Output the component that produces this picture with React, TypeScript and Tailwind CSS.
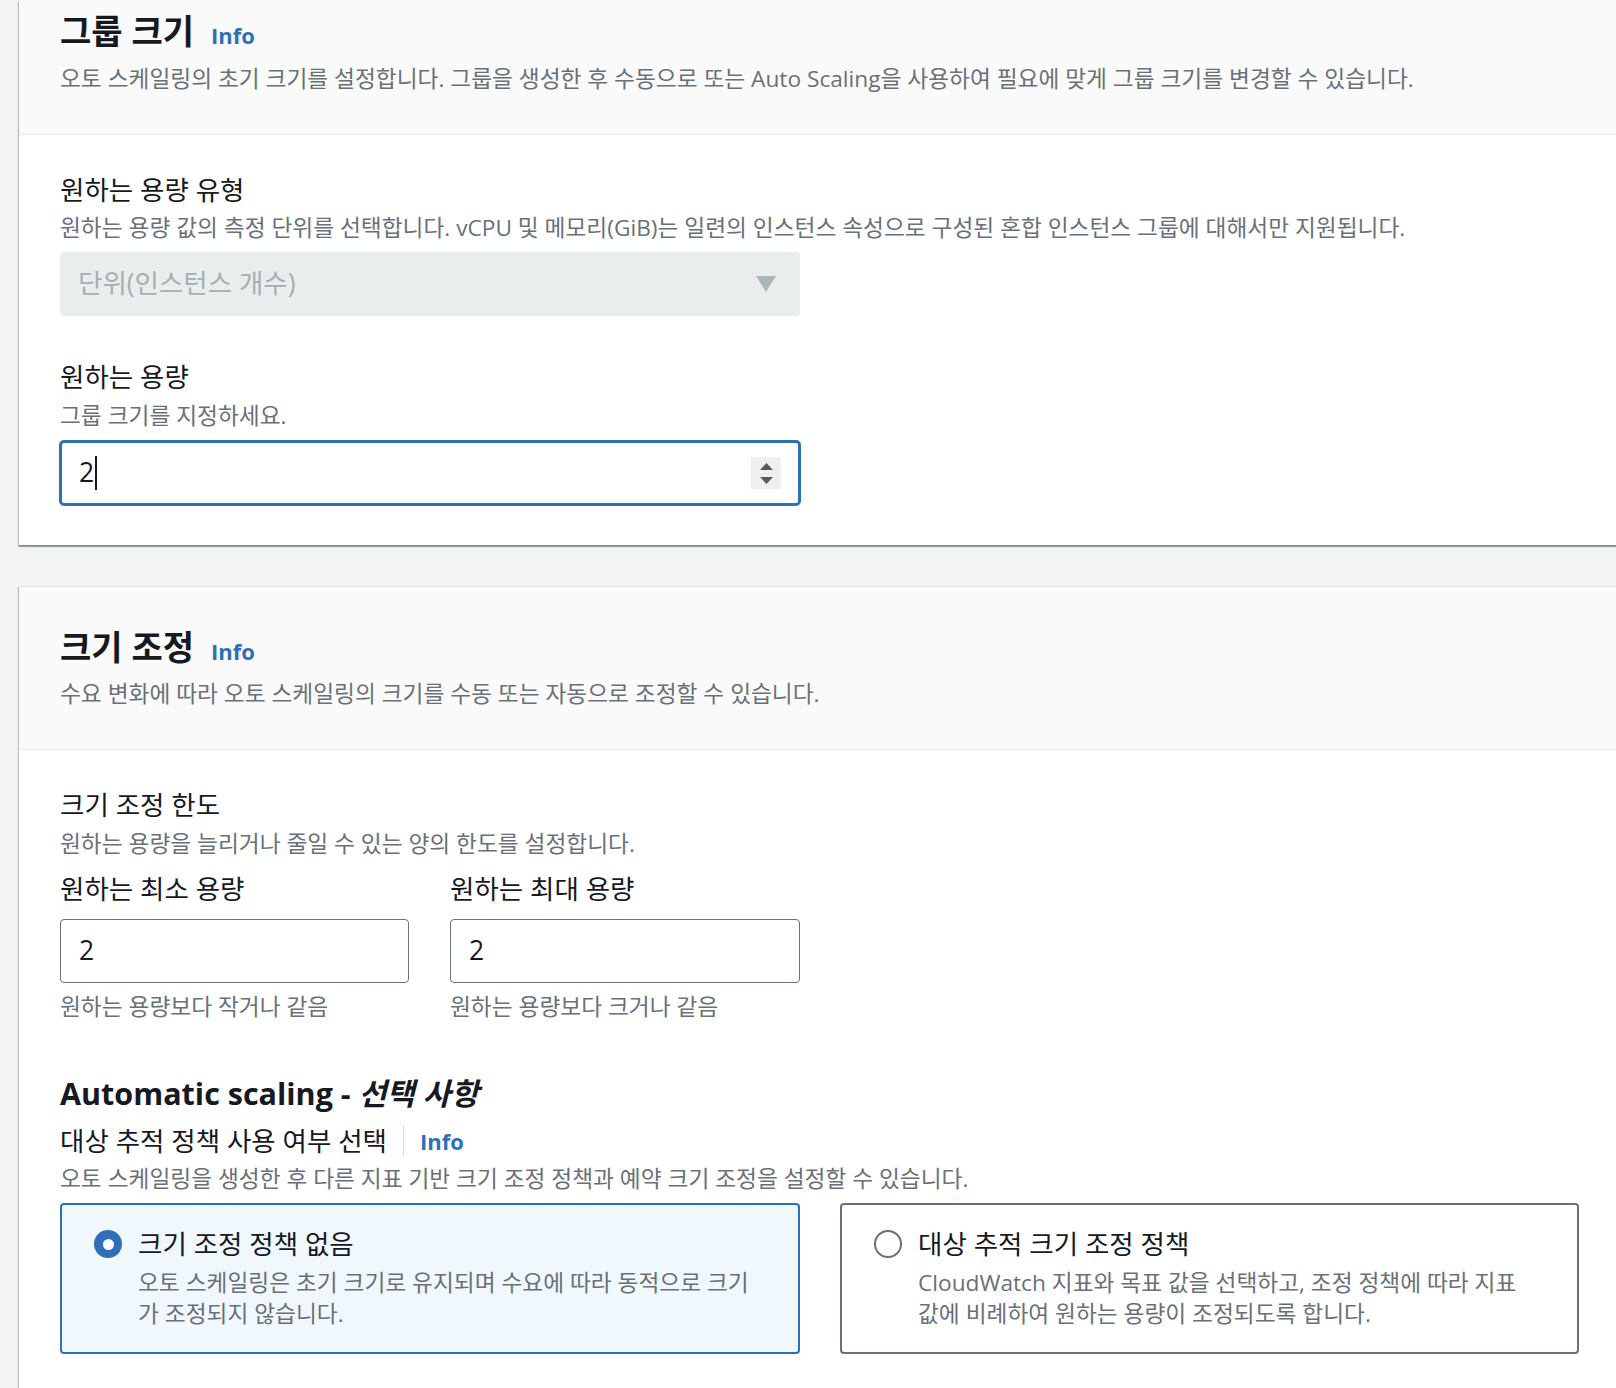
import React from "react";

function Info() {
  return <span className="text-[22px] font-bold leading-[30px] text-[#2f6fb7]">Info</span>;
}

function PanelTitle({ children }: { children: React.ReactNode }) {
  return (
    <div className="flex items-baseline">
      <h2 className="text-[34px] font-bold leading-[36px] text-[#16191f]">{children}</h2>
      <span className="ml-[17px]">
        <Info />
      </span>
    </div>
  );
}

function Label({ children, className = "" }: { children: React.ReactNode; className?: string }) {
  return <div className={`text-[26.5px] leading-[30px] text-[#16191f] ${className}`}>{children}</div>;
}

function Desc({ children, className = "" }: { children: React.ReactNode; className?: string }) {
  return <p className={`text-[22.7px] leading-[28px] text-[#687078] ${className}`}>{children}</p>;
}

function Radio({ checked }: { checked: boolean }) {
  if (checked) {
    return (
      <span className="mt-px flex h-[28px] w-[28px] shrink-0 items-center justify-center rounded-full bg-[#2f6fb7]">
        <span className="h-[11px] w-[11px] rounded-full bg-white" />
      </span>
    );
  }
  return <span className="mt-px h-[28px] w-[28px] shrink-0 rounded-full border-2 border-[#687078] bg-white" />;
}

function Tile({
  checked,
  title,
  lines,
}: {
  checked: boolean;
  title: string;
  lines: string[];
}) {
  return (
    <div
      className={
        checked
          ? "flex h-[151px] rounded-[4px] border-2 border-[#2f6fb7] bg-[#f1f8fd] pl-[32px] pt-[24px]"
          : "flex h-[151px] rounded-[4px] border-2 border-[#6b7178] bg-white pl-[32px] pt-[24px]"
      }
    >
      <Radio checked={checked} />
      <div className="ml-[16px]">
        <div className="text-[26.5px] leading-[30px] text-[#16191f]">{title}</div>
        <p className="mt-[8px] whitespace-nowrap text-[22.7px] leading-[31px] text-[#687078]">
          {lines[0]}
          <br />
          {lines[1]}
        </p>
      </div>
    </div>
  );
}

function NumberBox({ value }: { value: string }) {
  return (
    <div className="flex h-[64px] items-center rounded-[4px] border-[1.5px] border-[#6b7178] bg-white pl-[18px] text-[26.5px] text-[#16191f]">
      {value}
    </div>
  );
}

export default function App() {
  return (
    <div className="h-[1388px] w-[1616px] overflow-hidden bg-[#f2f3f3] font-['Open_Sans','Noto_Sans_CJK_KR',sans-serif]">
      <div className="ml-[19px] w-[1640px]">
        {/* 그룹 크기 */}
        <section className="bg-white shadow-[0_2px_1px_0_rgba(0,28,36,0.35),-1px_1px_1px_0_rgba(0,28,36,0.2)]">
          <div className="border-b border-[#eaeded] bg-[#fafafa] pb-[40px] pl-[41px] pt-[13px]">
            <PanelTitle>그룹 크기</PanelTitle>
            <p className="mt-[14px] text-[22.7px] leading-[30px] text-[#687078]">
              오토 스케일링의 초기 크기를 설정합니다. 그룹을 생성한 후 수동으로 또는 Auto Scaling을 사용하여 필요에 맞게 그룹 크기를 변경할 수 있습니다.
            </p>
          </div>
          <div className="pb-[39px] pl-[41px] pt-[40px]">
            <Label>원하는 용량 유형</Label>
            <Desc className="mt-[9px]">
              원하는 용량 값의 측정 단위를 선택합니다. vCPU 및 메모리(GiB)는 일련의 인스턴스 속성으로 구성된 혼합 인스턴스 그룹에 대해서만 지원됩니다.
            </Desc>
            <div className="mt-[10px] flex h-[64px] w-[740px] items-center justify-between rounded-[4px] bg-[#eaeded] pl-[18px] pr-[24px]">
              <span className="text-[26.5px] text-[#a4b0b1]">단위(인스턴스 개수)</span>
              <svg width="20" height="16" viewBox="0 0 20 16">
                <path d="M0 0 H20 L10 16 Z" fill="#aab7b8" />
              </svg>
            </div>

            <Label className="mt-[46px]">원하는 용량</Label>
            <Desc className="mt-[10px]">그룹 크기를 지정하세요.</Desc>
            <div className="mt-[10px] flex h-[66px] w-[742px] -translate-x-px items-center justify-between rounded-[5px] border-[3px] border-[#2f6fb7] bg-white pl-[17px] pr-[17px]">
              <span className="flex items-center text-[26.5px] text-[#16191f]">
                2<span className="ml-px h-[34px] w-[2px] bg-[#16191f]" />
              </span>
              <span className="flex h-[32px] w-[30px] flex-col items-center justify-center gap-[7px] bg-[#efefef]">
                <svg width="13" height="7" viewBox="0 0 13 7">
                  <path d="M0 7 L6.5 0 L13 7 Z" fill="#545b64" />
                </svg>
                <svg width="13" height="7" viewBox="0 0 13 7">
                  <path d="M0 0 H13 L6.5 7 Z" fill="#545b64" />
                </svg>
              </span>
            </div>
          </div>
        </section>

        {/* 크기 조정 */}
        <section className="mt-[41px] border-t border-[#e4e7e7] bg-white shadow-[0_2px_1px_0_rgba(0,28,36,0.35),-1px_1px_1px_0_rgba(0,28,36,0.2)]">
          <div className="border-b border-[#eaeded] bg-[#fafafa] pb-[40px] pl-[41px] pt-[42px]">
            <PanelTitle>크기 조정</PanelTitle>
            <p className="mt-[13px] text-[22.7px] leading-[30px] text-[#687078]">
              수요 변화에 따라 오토 스케일링의 크기를 수동 또는 자동으로 조정할 수 있습니다.
            </p>
          </div>
          <div className="pb-[80px] pl-[41px] pt-[40px]">
            <Label>크기 조정 한도</Label>
            <Desc className="mt-[10px]">원하는 용량을 늘리거나 줄일 수 있는 양의 한도를 설정합니다.</Desc>

            <div className="mt-[16px] grid w-[740px] grid-cols-[349px_350px] gap-x-[41px]">
              <div>
                <Label>원하는 최소 용량</Label>
                <div className="mt-[15px]">
                  <NumberBox value="2" />
                </div>
                <Desc className="mt-[10px]">원하는 용량보다 작거나 같음</Desc>
              </div>
              <div>
                <Label>원하는 최대 용량</Label>
                <div className="mt-[15px]">
                  <NumberBox value="2" />
                </div>
                <Desc className="mt-[10px]">원하는 용량보다 크거나 같음</Desc>
              </div>
            </div>

            <h3 className="mt-[54px] text-[30.5px] font-bold leading-[36px] text-[#16191f]">
              Automatic scaling - <span className="italic">선택 사항</span>
            </h3>
            <div className="mt-[15px] flex items-center">
              <Label>대상 추적 정책 사용 여부 선택</Label>
              <span className="ml-[16px] h-[30px] w-px bg-[#d5dbdb]" />
              <span className="ml-[16px]">
                <Info />
              </span>
            </div>
            <Desc className="mt-[9px]">오토 스케일링을 생성한 후 다른 지표 기반 크기 조정 정책과 예약 크기 조정을 설정할 수 있습니다.</Desc>

            <div className="mt-[10px] grid grid-cols-[740px_739px] gap-x-[40px]">
              <Tile
                checked
                title="크기 조정 정책 없음"
                lines={["오토 스케일링은 초기 크기로 유지되며 수요에 따라 동적으로 크기", "가 조정되지 않습니다."]}
              />
              <Tile
                checked={false}
                title="대상 추적 크기 조정 정책"
                lines={["CloudWatch 지표와 목표 값을 선택하고, 조정 정책에 따라 지표", "값에 비례하여 원하는 용량이 조정되도록 합니다."]}
              />
            </div>
          </div>
        </section>
      </div>
    </div>
  );
}
